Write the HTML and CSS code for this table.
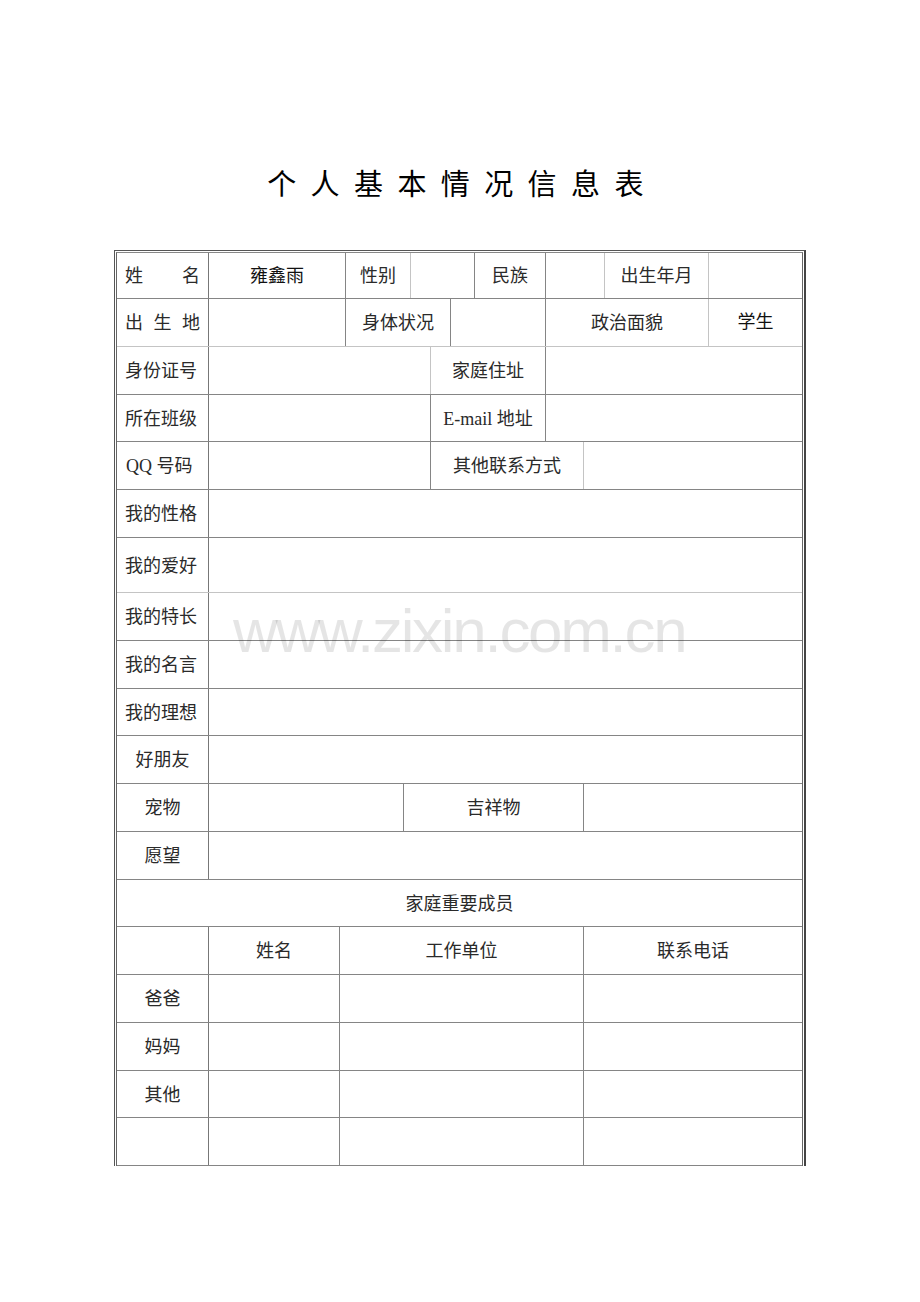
FILE: index.html
```html
<!DOCTYPE html>
<html lang="zh-CN">
<head>
<meta charset="utf-8">
<title>个人基本情况信息表</title>
<link rel="stylesheet" href="styles.css">
</head>
<body>
<div class="page">
  <h1 class="title">个人基本情况信息表</h1>
  <div class="frame">
    <div class="grid">
      <div class="row r1">
        <div class="c w92 just"><span>姓</span><span>名</span></div>
        <div class="c w137 ctr sans">雍鑫雨</div>
        <div class="c w65 ctr lt">性别</div>
        <div class="c w64"></div>
        <div class="c w71 ctr">民族</div>
        <div class="c w59 lt"></div>
        <div class="c w104 ctr lt">出生年月</div>
        <div class="c fill"></div>
      </div>
      <div class="row h48 lb">
        <div class="c w92 just"><span>出</span><span>生</span><span>地</span></div>
        <div class="c w137"></div>
        <div class="c w105 ctr">身体状况</div>
        <div class="c w95"></div>
        <div class="c w163 ctr lt">政治面貌</div>
        <div class="c fill ctr sans up">学生</div>
      </div>
      <div class="row h48">
        <div class="c w92">身份证号</div>
        <div class="c w222 lt"></div>
        <div class="c w115 ctr">家庭住址</div>
        <div class="c fill"></div>
      </div>
      <div class="row h47">
        <div class="c w92">所在班级</div>
        <div class="c w222"></div>
        <div class="c w115 ctr">E-mail 地址</div>
        <div class="c fill"></div>
      </div>
      <div class="row h48">
        <div class="c w92 qq">QQ 号码</div>
        <div class="c w222"></div>
        <div class="c w153 ctr lt">其他联系方式</div>
        <div class="c fill"></div>
      </div>
      <div class="row h48">
        <div class="c w92">我的性格</div>
        <div class="c fill"></div>
      </div>
      <div class="row h55 lb">
        <div class="c w92">我的爱好</div>
        <div class="c fill"></div>
      </div>
      <div class="row h48">
        <div class="c w92">我的特长</div>
        <div class="c fill"></div>
      </div>
      <div class="row h48">
        <div class="c w92">我的名言</div>
        <div class="c fill"></div>
      </div>
      <div class="row h47">
        <div class="c w92">我的理想</div>
        <div class="c fill"></div>
      </div>
      <div class="row h48">
        <div class="c w92 ctr">好朋友</div>
        <div class="c fill"></div>
      </div>
      <div class="row h48">
        <div class="c w92 ctr">宠物</div>
        <div class="c w195"></div>
        <div class="c w180 ctr">吉祥物</div>
        <div class="c fill"></div>
      </div>
      <div class="row h48">
        <div class="c w92 ctr">愿望</div>
        <div class="c fill"></div>
      </div>
      <div class="row h47">
        <div class="c fill ctr">家庭重要成员</div>
      </div>
      <div class="row h48">
        <div class="c w92"></div>
        <div class="c w131 ctr">姓名</div>
        <div class="c w244 ctr">工作单位</div>
        <div class="c fill ctr">联系电话</div>
      </div>
      <div class="row h48">
        <div class="c w92 ctr">爸爸</div>
        <div class="c w131"></div>
        <div class="c w244"></div>
        <div class="c fill"></div>
      </div>
      <div class="row h48">
        <div class="c w92 ctr">妈妈</div>
        <div class="c w131"></div>
        <div class="c w244"></div>
        <div class="c fill"></div>
      </div>
      <div class="row h47">
        <div class="c w92 ctr">其他</div>
        <div class="c w131"></div>
        <div class="c w244"></div>
        <div class="c fill"></div>
      </div>
      <div class="row h48">
        <div class="c w92"></div>
        <div class="c w131"></div>
        <div class="c w244"></div>
        <div class="c fill"></div>
      </div>
    </div>
  </div>
  <div class="watermark">www.zixin.com.cn</div>
</div>
</body>
</html>
```

FILE: styles.css
```css
html, body {
  margin: 0;
  padding: 0;
  background: #ffffff;
}

.page {
  position: relative;
  width: 920px;
  height: 1302px;
  padding-top: 164px;
  box-sizing: border-box;
  font-family: "Liberation Serif", "Noto Sans CJK SC", serif;
  color: #2a2a2a;
}

.title {
  margin: 0;
  height: 36px;
  line-height: 36px;
  text-align: center;
  font-family: "Noto Sans CJK SC", sans-serif;
  font-weight: 400;
  font-size: 29px;
  letter-spacing: 14.4px;
  padding-left: 5px;
  color: #000;
}

.frame {
  margin: 50px 0 0 114px;
  width: 692px;
  box-sizing: border-box;
  border-left: 1px solid #555;
  border-top: 1px solid #555;
  border-right: 2px solid #444;
  padding: 1px 1px 0 1px;
}

.grid {
  border-left: 1px solid #666;
  border-top: 1px solid #888;
  border-right: 1px solid #666;
}

.row {
  display: flex;
  box-sizing: border-box;
  border-bottom: 1px solid #858585;
  height: 48px;
}

.row.lb { border-bottom-color: #c4c4c4; }
.r1 { height: 46px; }
.h47 { height: 47px; }
.h48 { height: 48px; }
.h55 { height: 55px; }

.c {
  box-sizing: border-box;
  border-right: 1px solid #858585;
  display: flex;
  align-items: center;
  padding: 0 8px 3px 8px;
  font-size: 18px;
  white-space: nowrap;
}

.c.lt { border-right-color: #c4c4c4; }

.c.fill {
  flex: 1;
  border-right: none;
}

.ctr { justify-content: center; padding-left: 0; padding-right: 0; }
.just { justify-content: space-between; }
.qq { padding-left: 9px; }

.sans {
  font-family: "Noto Sans CJK SC", sans-serif;
  color: #111;
}
.up { padding-bottom: 6px; }

.w92 { width: 92px; flex: none; border-right-color: #777; }
.w137 { width: 137px; flex: none; }
.w65 { width: 65px; flex: none; }
.w64 { width: 64px; flex: none; }
.w71 { width: 71px; flex: none; }
.w59 { width: 59px; flex: none; }
.w104 { width: 104px; flex: none; }
.w105 { width: 105px; flex: none; }
.w95 { width: 95px; flex: none; }
.w163 { width: 163px; flex: none; }
.w222 { width: 222px; flex: none; }
.w115 { width: 115px; flex: none; }
.w153 { width: 153px; flex: none; }
.w195 { width: 195px; flex: none; }
.w180 { width: 180px; flex: none; }
.w131 { width: 131px; flex: none; }
.w244 { width: 244px; flex: none; }

.watermark {
  position: absolute;
  left: 233px;
  top: 600px;
  font-family: "Liberation Sans", sans-serif;
  font-size: 62px;
  line-height: 62px;
  letter-spacing: -2.3px;
  color: rgba(0, 0, 0, 0.1);
  white-space: nowrap;
}
```
